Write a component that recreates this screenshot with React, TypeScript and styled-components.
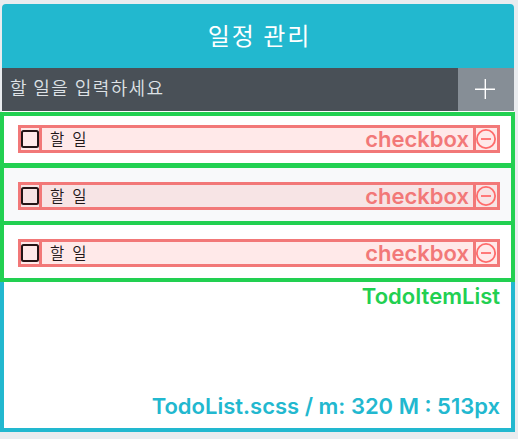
import React from "react";
import styled, { createGlobalStyle } from "styled-components";

const GlobalStyle = createGlobalStyle`
  *, *::before, *::after { box-sizing: border-box; }
  body {
    margin: 0;
    background: #e9ecef;
    overflow: hidden;
    font-family: "Noto Sans CJK KR", sans-serif;
  }
`;

const Page = styled.main`
  width: 515px;
  height: 432px;
  padding-top: 4px;
  display: flex;
  flex-direction: column;
`;

const Title = styled.h1`
  margin: 0 1px 0 2px;
  height: 64px;
  flex: none;
  padding-left: 3px;
  border-radius: 4px 4px 0 0;
  background: #22b8cf;
  color: #fff;
  font-size: 24px;
  font-weight: 400;
  line-height: 62px;
  letter-spacing: 2px;
  text-align: center;
`;

const Form = styled.form`
  margin: 0 1px 1px 2px;
  height: 43px;
  flex: none;
  display: flex;
  background: #495057;
  box-shadow: 0 1px 0 #fff;
`;

const Input = styled.input`
  flex: 1;
  min-width: 0;
  border: 0;
  padding: 0 8px 5px;
  background: transparent;
  font: 350 18px "Noto Sans CJK KR", sans-serif;
  letter-spacing: 1.4px;
  &::placeholder { color: #dee2e6; opacity: 1; }
`;

const AddButton = styled.button`
  width: 56px;
  padding: 0 2px 2px 0;
  border: 0;
  background: #868e96;
  display: flex;
  align-items: center;
  justify-content: center;
`;

const Content = styled.section`
  flex: 1;
  border: 4px solid #22b8cf;
  border-top: 0;
  background: #fff;
  display: flex;
  flex-direction: column;
`;

const List = styled.ul`
  list-style: none;
  margin: 0 -4px;
  padding: 0;
  flex: none;
  border: 4px solid #22d051;
`;

const Item = styled.li<{ $shaded?: boolean }>`
  padding: 14px 11px 0 14px;
  background: ${(p) => (p.$shaded ? "#f8f9fa" : "#fff")};
  &:first-child { height: 52px; padding-top: 9px; border-bottom: 5px solid #22d051; }
  &:nth-child(2) { height: 57px; border-bottom: 4px solid #22d051; }
  &:last-child { height: 53px; }
`;

const Outline = styled.div<{ $shaded?: boolean }>`
  display: flex;
  height: 28px;
  border: 3px solid #f27878;
  background: ${(p) => (p.$shaded ? "#f7e4e5" : "#ffe9e9")};
`;

const CheckCell = styled.label`
  width: 21px;
  flex: none;
  border-right: 3px solid #f27878;
  padding-top: 2px;
`;

const Checkbox = styled.input`
  appearance: none;
  display: block;
  width: 18px;
  height: 18px;
  margin: 0;
  border: 2px solid #251416;
  border-radius: 2.5px;
`;

const Task = styled.span`
  flex: 1;
  padding-left: 8px;
  font-size: 15.5px;
  font-weight: 350;
  line-height: 21px;
  letter-spacing: 1px;
  word-spacing: 2.5px;
  color: #211719;
`;

const Label = styled.span`
  padding-right: 4px;
  font: 600 22px/23px Inter, sans-serif;
  color: #f27878;
`;

const RemoveCell = styled.button`
  width: 24px;
  flex: none;
  display: flex;
  align-items: flex-start;
  border: 0;
  border-left: 3px solid #f27878;
  padding: 1px 0 0;
  background: transparent;
  color: #ff6b6b;
`;

const Note = styled.p<{ $tone: string; $bottom?: boolean }>`
  margin: ${(p) => (p.$bottom ? "auto 11px 9px" : "1px 11px 0")};
  font: 600 22px/26px Inter, sans-serif;
  color: ${(p) => p.$tone};
  text-align: right;
  white-space: nowrap;
`;

const PlusIcon = () => (
  <svg width="20" height="20" viewBox="0 0 20 20" fill="none" stroke="#fff" strokeWidth="1.4">
    <path d="M0 10.3H20M10.3 0V20" />
  </svg>
);

const MinusIcon = () => (
  <svg width="20" height="20" viewBox="0 0 20 20" fill="none" stroke="currentColor" strokeWidth="1.8">
    <circle cx="10" cy="10" r="9.1" />
    <path d="M5 10H15" />
  </svg>
);

const tasks = [
  { id: 1, text: "할 일" },
  { id: 2, text: "할 일", shaded: true },
  { id: 3, text: "할 일" },
];

export default function App() {
  return (
    <>
      <GlobalStyle />
      <Page>
        <Title>일정 관리</Title>
        <Form onSubmit={(e) => e.preventDefault()}>
          <Input placeholder="할 일을 입력하세요" />
          <AddButton aria-label="추가">
            <PlusIcon />
          </AddButton>
        </Form>
        <Content>
          <List>
            {tasks.map((t) => (
              <Item key={t.id} $shaded={t.shaded}>
                <Outline $shaded={t.shaded}>
                  <CheckCell>
                    <Checkbox type="checkbox" />
                  </CheckCell>
                  <Task>{t.text}</Task>
                  <Label>checkbox</Label>
                  <RemoveCell aria-label="삭제">
                    <MinusIcon />
                  </RemoveCell>
                </Outline>
              </Item>
            ))}
          </List>
          <Note $tone="#22d051">TodoItemList</Note>
          <Note $tone="#22b8cf" $bottom>
            TodoList.scss / m: 320 M : 513px
          </Note>
        </Content>
      </Page>
    </>
  );
}
